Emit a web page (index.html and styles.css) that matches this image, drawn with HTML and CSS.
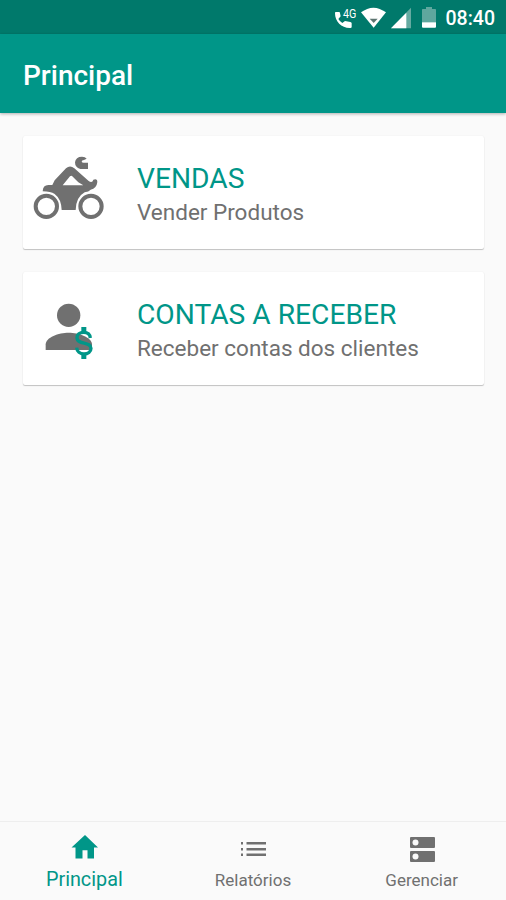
FILE: index.html
```html
<!DOCTYPE html>
<html lang="pt-BR">
<head>
    <meta charset="UTF-8">
    <meta name="viewport" content="width=device-width, initial-scale=1.0">
    <title>Principal</title>
    <link rel="stylesheet" href="styles.css">
</head>
<body>
    <div class="status-bar">
        <svg class="icon-call" viewBox="26 14 66 72">
            <path fill="#fff" d="M28 35h10q3 0 3 4l2 9-7 8q5 8 12 12l8-6 16 3q4 1 4 4v11q0 3-4 3C46 84 26 64 26 39q0-4 2-4z"/>
            <text class="net-type" x="50" y="53" textLength="40" lengthAdjust="spacingAndGlyphs">4G</text>
        </svg>
        <svg class="icon-wifi" viewBox="104 20 75 66">
            <path fill="#fff" d="M104 36q37-28 75 0l-37 46z"/>
            <path fill="#5d7470" d="M130 55h24l-12 13z"/>
        </svg>
        <svg class="icon-signal" viewBox="194 20 60 66">
            <path fill="#65aaa1" d="M254 22v62h-60z"/>
            <path fill="#fff" d="M240 37v47h-46z"/>
        </svg>
        <svg class="icon-battery" viewBox="288 17 42 69">
            <path fill="#5fa79e" d="M290 26h10v-6h18v6h10q2 0 2 3v37h-42V29q0-3 2-3z"/>
            <path fill="#fff" d="M288 66h42v13q0 3-3 3h-36q-3 0-3-3z"/>
        </svg>
        <span class="clock">08:40</span>
    </div>

    <header class="toolbar">
        <h1>Principal</h1>
    </header>

    <main>
        <div class="card">
            <div class="card-icon">
                <svg class="icon-moto" viewBox="69 90 216 198">
                    <g fill="none" stroke="#707070" stroke-width="12">
                        <circle cx="109" cy="244" r="32"/>
                        <circle cx="243" cy="244" r="32"/>
                    </g>
                    <path fill="#707070" fill-rule="evenodd" d="M98 199Q99 180 115 180H127L134 166 168 130Q180 119 193 130L236 168Q247 175 250 164 262 159 262 171 260 190 242 194 236 200 224 202 198 216 197 255H155Q154 222 134 207 122 199 98 199zM158 181H220L205 172 186 153Q183 151 180 154z"/>
                    <path fill="#707070" d="M195 112Q197 95 216 95 226 95 230 101L222 105Q215 106 215 110 216 113 221 113H234V132H211Q195 128 195 112z"/>
                </svg>
            </div>
            <div class="card-text">
                <h2>VENDAS</h2>
                <p>Vender Produtos</p>
            </div>
        </div>

        <div class="card">
            <div class="card-icon">
                <svg class="icon-person" viewBox="105 130 147 171">
                    <circle cx="176" cy="167" r="35" fill="#707070"/>
                    <path fill="#707070" d="M107 271v-17c0-21 39-35 69-35s70 14 70 35v17z"/>
                    <path fill="none" stroke="#009688" stroke-width="10" d="M241 235c-1-12-10-17-20-17-12 0-20 6-20 16 0 22 42 11 42 32 0 10-9 17-21 17s-21-7-22-19"/>
                    <path fill="#009688" d="M214 202h15v16h-15zM214 283h15v15h-15z"/>
                </svg>
            </div>
            <div class="card-text">
                <h2>CONTAS A RECEBER</h2>
                <p>Receber contas dos clientes</p>
            </div>
        </div>
    </main>

    <nav class="bottom-nav">
        <a class="nav-item active">
            <svg viewBox="0 0 28 28">
                <path d="M12.5 25.5v-8.3h5v8.3H24v-11h4L15 2 1.5 14.500h4v11z"/>
            </svg>
            <span>Principal</span>
        </a>
        <a class="nav-item">
            <svg viewBox="0 0 28 28">
                <path d="M2 7h2v2.400H2zM2 13h2v2.400H2zM2 18.600h2V21H2zM7.500 7H27v2.400H7.500zM7.500 13H27v2.400H7.500zM7.500 18.600H27V21H7.500z"/>
            </svg>
            <span>Relatórios</span>
        </a>
        <a class="nav-item">
            <svg viewBox="0 0 28 28">
                <path d="M3 2h23q1 0 1 1v9q0 1-1 1H3q-1 0-1-1V3q0-1 1-1zM3 16h23q1 0 1 1v9q0 1-1 1H3q-1 0-1-1v-9q0-1 1-1z"/>
                <circle class="dot" cx="7.5" cy="7.5" r="3"/>
                <circle class="dot" cx="7.5" cy="21.5" r="3"/>
            </svg>
            <span>Gerenciar</span>
        </a>
    </nav>
</body>
</html>
```

FILE: styles.css
```css
* {
    box-sizing: border-box;
}

body {
    margin: 0;
    height: 100vh;
    display: flex;
    flex-direction: column;
    background-color: #fafafa;
    font-family: Roboto, sans-serif;
    overflow: hidden;
}

h1, h2, p {
    margin: 0;
    font-weight: 400;
}

svg {
    display: block;
}

/* Barra de status */
.status-bar {
    height: 34px;
    flex: none;
    display: flex;
    justify-content: flex-end;
    align-items: center;
    padding: 1px 11px 0 0;
    background-color: #00796b;
}

.icon-call {
    width: 22px;
    height: 24px;
    margin-right: 4px;
    margin-bottom: 2px;
    overflow: visible;
}

.net-type {
    font-size: 38px;
    fill: #fff;
}

.icon-wifi {
    width: 25px;
    height: 22px;
    margin-right: 5px;
}

.icon-signal {
    width: 20px;
    height: 22px;
    margin-right: 11px;
}

.icon-battery {
    width: 14px;
    height: 23px;
    margin-right: 10px;
}

.clock {
    color: #fff;
    font-size: 19.5px;
    font-weight: 500;
    line-height: 33px;
    padding-top: 2px;
}

.toolbar {
    height: 79px;
    flex: none;
    display: flex;
    align-items: center;
    padding: 4px 23px 0;
    background-color: #009688;
    box-shadow: 0 1px 3px rgba(0, 0, 0, 0.3);
}

.toolbar h1 {
    color: #fff;
    font-size: 28px;
    font-weight: 500;
}

/* Cartões */
main {
    flex: 1;
    display: flex;
    flex-direction: column;
    gap: 23px;
    padding: 23px 22px 0 23px;
}

.card {
    height: 113px;
    display: flex;
    align-items: center;
    background-color: #fff;
    border-radius: 2px;
    box-shadow: 0 1px 1px rgba(0, 0, 0, 0.22), 0 0 2px rgba(0, 0, 0, 0.06);
}

.card-icon {
    width: 92px;
    margin-right: 22px;
    display: flex;
    justify-content: center;
}

.icon-moto {
    width: 72px;
    height: 66px;
    margin-bottom: 10px;
}

.icon-person {
    width: 49px;
    height: 57px;
    margin-top: 5px;
}

.card-text {
    padding-top: 3px;
}

.card-text h2 {
    color: #009688;
    font-size: 28.2px;
    line-height: 36px;
}

.card-text p {
    color: #707070;
    font-size: 22.5px;
    line-height: 31px;
}

/* Menu inferior */
.bottom-nav {
    height: 79px;
    flex: none;
    display: flex;
    border-top: 1px solid #eee;
    background-color: #fafafa;
}

.nav-item {
    flex: 1;
    display: flex;
    flex-direction: column;
    align-items: center;
    padding-top: 13px;
    color: #707070;
    font-size: 17px;
    line-height: 22px;
}

.nav-item svg {
    width: 28px;
    height: 28px;
    margin-bottom: 6px;
    fill: currentColor;
}

.nav-item .dot {
    fill: #fafafa;
}

.nav-item.active {
    padding-top: 11px;
    color: #009688;
    font-size: 19.8px;
}

.nav-item.active svg {
    margin-bottom: 8px;
}
```
